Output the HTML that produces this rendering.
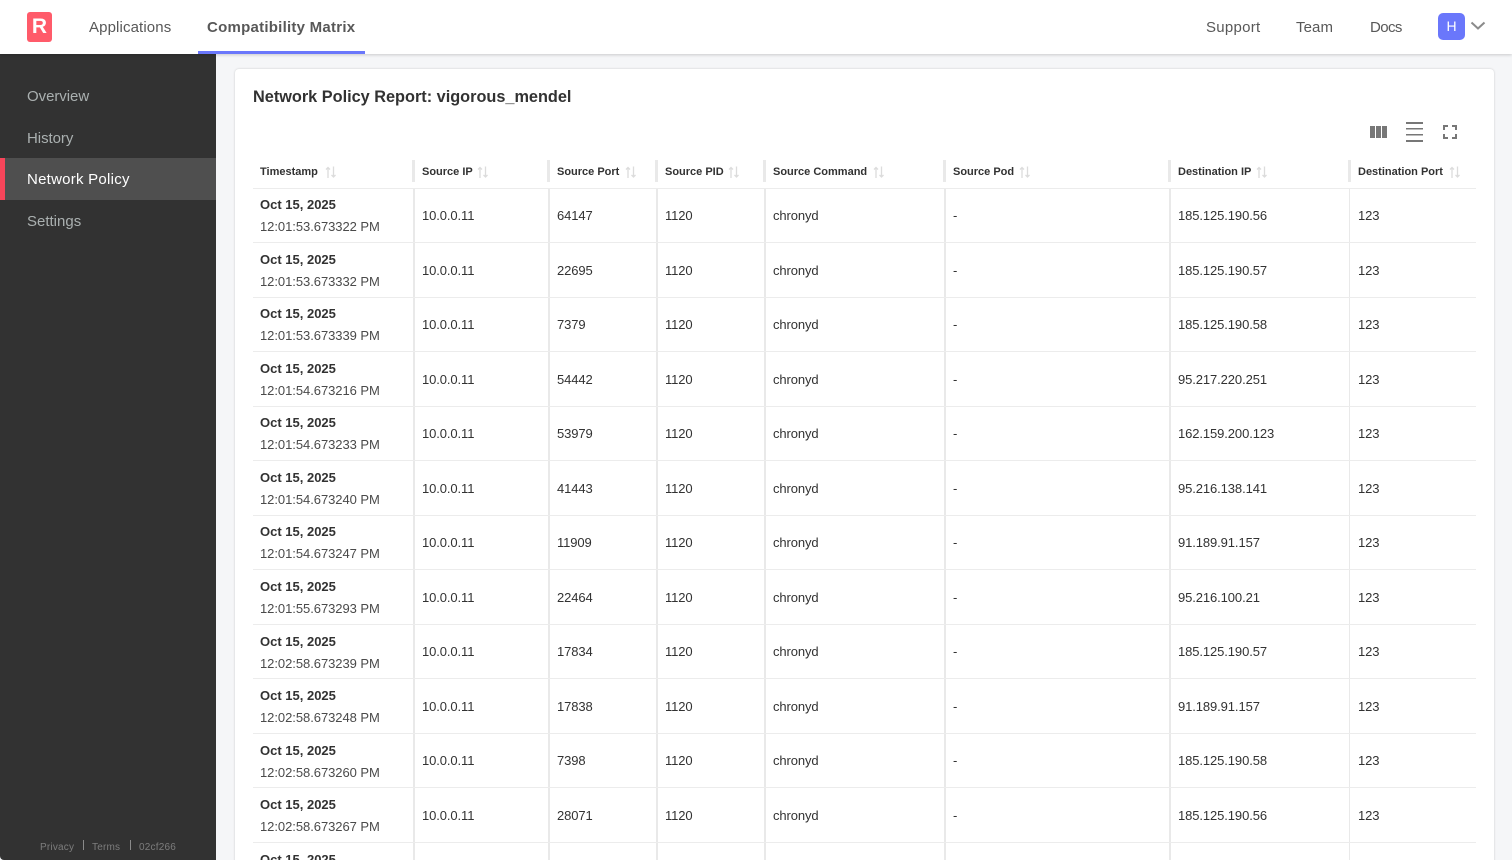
<!DOCTYPE html>
<html><head><meta charset="utf-8"><style>
html,body{margin:0;padding:0;width:1512px;height:860px;overflow:hidden;background:#f5f6f8;font-family:"Liberation Sans",sans-serif}
#p{position:relative;width:1512px;height:860px;overflow:hidden}
#r{position:absolute;left:0;top:1px;width:1512px;height:859px}
.a{position:absolute;white-space:nowrap}
.nav{font-size:15px;color:#585858;top:18px;line-height:20px;letter-spacing:.12px}
.side{font-size:15px;color:#aab0b0;left:27px;line-height:20px;letter-spacing:.1px}
.th{font-size:11px;font-weight:bold;color:#323232;top:165px;line-height:14px;letter-spacing:0}
.d{font-size:13px;color:#323232;line-height:18px;letter-spacing:-.1px}
.b{font-weight:bold;letter-spacing:0;color:#323232}
.t{color:#4a4a4a;letter-spacing:-.05px}
.g{background:#e9e9e9;position:absolute}
.h{background:#ececec;position:absolute;left:253px;width:1223px;height:1px}
.ft{font-size:10px;color:#7d7d7d;top:841px;line-height:14px;letter-spacing:.2px}
</style></head><body><div id="p">
<div class="a" style="left:0;top:0;width:1512px;height:54px;background:#fff;box-shadow:0 1px 3px rgba(0,0,0,.18);z-index:3"></div>
<div class="a" style="left:27px;top:12px;width:25px;height:30px;background:#ff5b6a;border-radius:3px;z-index:4;color:#fff;font-weight:bold;font-size:21px;line-height:30px;text-align:center">R</div>
<div class="a nav" style="left:89px;z-index:4">Applications</div>
<div class="a nav" style="left:207px;z-index:4;font-weight:bold;letter-spacing:.25px">Compatibility Matrix</div>
<div class="a" style="left:198px;top:51px;width:167px;height:3px;background:#6a77fb;z-index:4"></div>
<div class="a nav" style="left:1206px;z-index:4;letter-spacing:.28px">Support</div>
<div class="a nav" style="left:1296px;z-index:4;letter-spacing:.1px">Team</div>
<div class="a nav" style="left:1370px;z-index:4;letter-spacing:-.6px">Docs</div>
<div class="a" style="left:1438px;top:13px;width:27px;height:27px;background:#6a77fb;border-radius:5px;z-index:4;color:#fff;font-size:14px;line-height:27px;text-align:center">H</div>
<svg class="a" style="left:1470px;top:20px;z-index:4" width="16" height="12"><path d="M1.500 2.500L8 8.500L14.500 2.500" fill="none" stroke="#8b8b8b" stroke-width="2"/></svg>

<div class="a" style="left:0;top:54px;width:216px;height:806px;background:#323232;border-bottom-left-radius:4px"></div>
<div class="a side" style="top:87px;letter-spacing:-.05px">Overview</div>
<div class="a side" style="top:129px;letter-spacing:-.05px">History</div>
<div class="a" style="left:0;top:158px;width:216px;height:42px;background:#4f4f4f"></div>
<div class="a" style="left:0;top:158px;width:5px;height:42px;background:#f7455a"></div>
<div class="a side" style="top:170px;color:#fff;letter-spacing:.25px">Network Policy</div>
<div class="a side" style="top:212px;letter-spacing:0">Settings</div>
<div class="a ft" style="left:40px">Privacy</div>
<div class="a" style="left:83px;top:840px;width:1px;height:10px;background:#8a8a8a"></div>
<div class="a ft" style="left:92px">Terms</div>
<div class="a" style="left:130px;top:840px;width:1px;height:10px;background:#8a8a8a"></div>
<div class="a ft" style="left:139px">02cf266</div>

<div class="a" style="left:235px;top:69px;width:1259px;height:800px;background:#fff;border-radius:4px;box-shadow:0 0 2px rgba(0,0,0,.18)"></div>
<div class="a" style="left:253px;top:87px;font-size:16.3px;line-height:21px;font-weight:bold;color:#323232;letter-spacing:0">Network Policy Report: vigorous_mendel</div>

<svg class="a" style="left:1370px;top:122px" width="100" height="20" fill="#777">
<rect x="0" y="4" width="5" height="12"/><rect x="6" y="4" width="5" height="12"/><rect x="12" y="4" width="5" height="12"/>
<rect x="36" y="0" width="17" height="2"/><rect x="36" y="6" width="17" height="1.500"/><rect x="36" y="12" width="17" height="1.500"/><rect x="36" y="18" width="17" height="2"/>
<path d="M74 8V4H78M82 4H86V8M86 12V16H82M78 16H74V12" fill="none" stroke="#777" stroke-width="2"/>
</svg>

<div class="a th" style="left:260px">Timestamp</div>
<div class="a th" style="left:422px">Source IP</div>
<div class="a th" style="left:557px">Source Port</div>
<div class="a th" style="left:665px">Source PID</div>
<div class="a th" style="left:773px">Source Command</div>
<div class="a th" style="left:953px">Source Pod</div>
<div class="a th" style="left:1178px">Destination IP</div>
<div class="a th" style="left:1358px">Destination Port</div>
<svg width="0" height="0" style="position:absolute"><defs><g id="s" fill="none" stroke="#dcdcdc" stroke-width="1.300"><path d="M3 12V1.500M1 3.500L3 1.500L5 3.500M8.500 0.500V11M6.500 9L8.500 11L10.500 9"/></g></defs></svg>
<svg class="a" style="left:325px;top:166px" width="12" height="13"><use href="#s"/></svg>
<svg class="a" style="left:477px;top:166px" width="12" height="13"><use href="#s"/></svg>
<svg class="a" style="left:625px;top:166px" width="12" height="13"><use href="#s"/></svg>
<svg class="a" style="left:728px;top:166px" width="12" height="13"><use href="#s"/></svg>
<svg class="a" style="left:873px;top:166px" width="12" height="13"><use href="#s"/></svg>
<svg class="a" style="left:1019px;top:166px" width="12" height="13"><use href="#s"/></svg>
<svg class="a" style="left:1256px;top:166px" width="12" height="13"><use href="#s"/></svg>
<svg class="a" style="left:1449px;top:166px" width="12" height="13"><use href="#s"/></svg>

<div class="g" style="left:412px;top:160px;width:3px;height:22px"></div>
<div class="g" style="left:547px;top:160px;width:3px;height:22px"></div>
<div class="g" style="left:655px;top:160px;width:3px;height:22px"></div>
<div class="g" style="left:763px;top:160px;width:3px;height:22px"></div>
<div class="g" style="left:943px;top:160px;width:3px;height:22px"></div>
<div class="g" style="left:1168px;top:160px;width:3px;height:22px"></div>
<div class="g" style="left:1348px;top:160px;width:3px;height:22px"></div>
<div class="g" style="left:413px;top:188px;width:2px;height:672px"></div>
<div class="g" style="left:548px;top:188px;width:2px;height:672px"></div>
<div class="g" style="left:656px;top:188px;width:2px;height:672px"></div>
<div class="g" style="left:764px;top:188px;width:2px;height:672px"></div>
<div class="g" style="left:944px;top:188px;width:2px;height:672px"></div>
<div class="g" style="left:1169px;top:188px;width:2px;height:672px"></div>
<div class="g" style="left:1349px;top:188px;width:1px;height:672px"></div>

<div class="h" style="top:188px"></div><div class="h" style="top:242px"></div><div class="h" style="top:297px"></div><div class="h" style="top:351px"></div><div class="h" style="top:406px"></div><div class="h" style="top:460px"></div><div class="h" style="top:515px"></div><div class="h" style="top:569px"></div><div class="h" style="top:624px"></div><div class="h" style="top:678px"></div><div class="h" style="top:733px"></div><div class="h" style="top:787px"></div><div class="h" style="top:842px"></div>

<div id="r">
<div class="a d b" style="left:260px;top:195px">Oct 15, 2025</div><div class="a d t" style="left:260px;top:217px">12:01:53.673322 PM</div><div class="a d" style="left:422px;top:206px">10.0.0.11</div><div class="a d" style="left:557px;top:206px">64147</div><div class="a d" style="left:665px;top:206px">1120</div><div class="a d" style="left:773px;top:206px">chronyd</div><div class="a d" style="left:953px;top:206px">-</div><div class="a d" style="left:1178px;top:206px">185.125.190.56</div><div class="a d" style="left:1358px;top:206px">123</div>
<div class="a d b" style="left:260px;top:250px">Oct 15, 2025</div><div class="a d t" style="left:260px;top:272px">12:01:53.673332 PM</div><div class="a d" style="left:422px;top:261px">10.0.0.11</div><div class="a d" style="left:557px;top:261px">22695</div><div class="a d" style="left:665px;top:261px">1120</div><div class="a d" style="left:773px;top:261px">chronyd</div><div class="a d" style="left:953px;top:261px">-</div><div class="a d" style="left:1178px;top:261px">185.125.190.57</div><div class="a d" style="left:1358px;top:261px">123</div>
<div class="a d b" style="left:260px;top:304px">Oct 15, 2025</div><div class="a d t" style="left:260px;top:326px">12:01:53.673339 PM</div><div class="a d" style="left:422px;top:315px">10.0.0.11</div><div class="a d" style="left:557px;top:315px">7379</div><div class="a d" style="left:665px;top:315px">1120</div><div class="a d" style="left:773px;top:315px">chronyd</div><div class="a d" style="left:953px;top:315px">-</div><div class="a d" style="left:1178px;top:315px">185.125.190.58</div><div class="a d" style="left:1358px;top:315px">123</div>
<div class="a d b" style="left:260px;top:359px">Oct 15, 2025</div><div class="a d t" style="left:260px;top:381px">12:01:54.673216 PM</div><div class="a d" style="left:422px;top:370px">10.0.0.11</div><div class="a d" style="left:557px;top:370px">54442</div><div class="a d" style="left:665px;top:370px">1120</div><div class="a d" style="left:773px;top:370px">chronyd</div><div class="a d" style="left:953px;top:370px">-</div><div class="a d" style="left:1178px;top:370px">95.217.220.251</div><div class="a d" style="left:1358px;top:370px">123</div>
<div class="a d b" style="left:260px;top:413px">Oct 15, 2025</div><div class="a d t" style="left:260px;top:435px">12:01:54.673233 PM</div><div class="a d" style="left:422px;top:424px">10.0.0.11</div><div class="a d" style="left:557px;top:424px">53979</div><div class="a d" style="left:665px;top:424px">1120</div><div class="a d" style="left:773px;top:424px">chronyd</div><div class="a d" style="left:953px;top:424px">-</div><div class="a d" style="left:1178px;top:424px">162.159.200.123</div><div class="a d" style="left:1358px;top:424px">123</div>
<div class="a d b" style="left:260px;top:468px">Oct 15, 2025</div><div class="a d t" style="left:260px;top:490px">12:01:54.673240 PM</div><div class="a d" style="left:422px;top:479px">10.0.0.11</div><div class="a d" style="left:557px;top:479px">41443</div><div class="a d" style="left:665px;top:479px">1120</div><div class="a d" style="left:773px;top:479px">chronyd</div><div class="a d" style="left:953px;top:479px">-</div><div class="a d" style="left:1178px;top:479px">95.216.138.141</div><div class="a d" style="left:1358px;top:479px">123</div>
<div class="a d b" style="left:260px;top:522px">Oct 15, 2025</div><div class="a d t" style="left:260px;top:544px">12:01:54.673247 PM</div><div class="a d" style="left:422px;top:533px">10.0.0.11</div><div class="a d" style="left:557px;top:533px">11909</div><div class="a d" style="left:665px;top:533px">1120</div><div class="a d" style="left:773px;top:533px">chronyd</div><div class="a d" style="left:953px;top:533px">-</div><div class="a d" style="left:1178px;top:533px">91.189.91.157</div><div class="a d" style="left:1358px;top:533px">123</div>
<div class="a d b" style="left:260px;top:577px">Oct 15, 2025</div><div class="a d t" style="left:260px;top:599px">12:01:55.673293 PM</div><div class="a d" style="left:422px;top:588px">10.0.0.11</div><div class="a d" style="left:557px;top:588px">22464</div><div class="a d" style="left:665px;top:588px">1120</div><div class="a d" style="left:773px;top:588px">chronyd</div><div class="a d" style="left:953px;top:588px">-</div><div class="a d" style="left:1178px;top:588px">95.216.100.21</div><div class="a d" style="left:1358px;top:588px">123</div>
<div class="a d b" style="left:260px;top:632px">Oct 15, 2025</div><div class="a d t" style="left:260px;top:654px">12:02:58.673239 PM</div><div class="a d" style="left:422px;top:642px">10.0.0.11</div><div class="a d" style="left:557px;top:642px">17834</div><div class="a d" style="left:665px;top:642px">1120</div><div class="a d" style="left:773px;top:642px">chronyd</div><div class="a d" style="left:953px;top:642px">-</div><div class="a d" style="left:1178px;top:642px">185.125.190.57</div><div class="a d" style="left:1358px;top:642px">123</div>
<div class="a d b" style="left:260px;top:686px">Oct 15, 2025</div><div class="a d t" style="left:260px;top:708px">12:02:58.673248 PM</div><div class="a d" style="left:422px;top:697px">10.0.0.11</div><div class="a d" style="left:557px;top:697px">17838</div><div class="a d" style="left:665px;top:697px">1120</div><div class="a d" style="left:773px;top:697px">chronyd</div><div class="a d" style="left:953px;top:697px">-</div><div class="a d" style="left:1178px;top:697px">91.189.91.157</div><div class="a d" style="left:1358px;top:697px">123</div>
<div class="a d b" style="left:260px;top:741px">Oct 15, 2025</div><div class="a d t" style="left:260px;top:763px">12:02:58.673260 PM</div><div class="a d" style="left:422px;top:751px">10.0.0.11</div><div class="a d" style="left:557px;top:751px">7398</div><div class="a d" style="left:665px;top:751px">1120</div><div class="a d" style="left:773px;top:751px">chronyd</div><div class="a d" style="left:953px;top:751px">-</div><div class="a d" style="left:1178px;top:751px">185.125.190.58</div><div class="a d" style="left:1358px;top:751px">123</div>
<div class="a d b" style="left:260px;top:795px">Oct 15, 2025</div><div class="a d t" style="left:260px;top:817px">12:02:58.673267 PM</div><div class="a d" style="left:422px;top:806px">10.0.0.11</div><div class="a d" style="left:557px;top:806px">28071</div><div class="a d" style="left:665px;top:806px">1120</div><div class="a d" style="left:773px;top:806px">chronyd</div><div class="a d" style="left:953px;top:806px">-</div><div class="a d" style="left:1178px;top:806px">185.125.190.56</div><div class="a d" style="left:1358px;top:806px">123</div>
<div class="a d b" style="left:260px;top:850px">Oct 15, 2025</div>
</div>
</div></body></html>
